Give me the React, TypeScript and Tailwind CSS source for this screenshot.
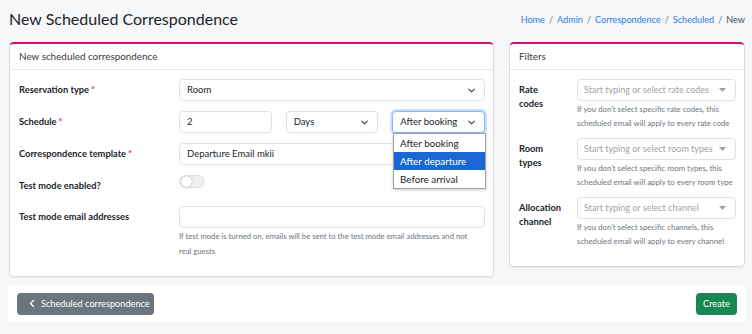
import React from "react";

const font = { fontFamily: "Lato, 'Noto Sans', sans-serif" };

function Chevron() {
  return (
    <svg width="9" height="9" viewBox="0 0 16 16" className="text-[#343a40]">
      <path d="M3 5.5l5 5 5-5" fill="none" stroke="currentColor" strokeWidth="1.8" strokeLinecap="round" strokeLinejoin="round" />
    </svg>
  );
}

function Caret() {
  return (
    <svg width="7" height="4" viewBox="0 0 7 4" className="text-[#9aa0a6]">
      <path d="M0 0h7L3.5 4z" fill="currentColor" />
    </svg>
  );
}

function Required() {
  return <span className="text-[#d6336c] ml-[2px]">*</span>;
}

function Select({ value, focused }: { value: string; focused?: boolean }) {
  return (
    <div
      className={
        "h-[22px] flex items-center justify-between pl-[7px] pr-[8px] rounded-[4px] bg-white text-[9.5px] text-[#212529] border " +
        (focused ? "border-[#86b7fe] shadow-[0_0_0_2px_rgba(13,110,253,0.22)]" : "border-[#dee2e6]")
      }
    >
      <span>{value}</span>
      <Chevron />
    </div>
  );
}

function Input({ value }: { value?: string }) {
  return (
    <div className="h-[22px] flex items-center px-[7px] rounded-[4px] bg-white border border-[#dee2e6] text-[9.5px] text-[#212529]">
      {value}
    </div>
  );
}

function FilterRow({ label, placeholder, help }: { label: string[]; placeholder: string; help: string[] }) {
  return (
    <div className="flex mb-[8px]">
      <div className="w-[58px] pt-[4px] text-[9.3px] font-bold leading-[14px] text-[#212529]">
        {label.map((l) => (
          <div key={l}>{l}</div>
        ))}
      </div>
      <div className="flex-1">
        <div className="h-[22px] flex items-center justify-between pl-[6px] pr-[9px] rounded-[4px] bg-white border border-[#dee2e6] text-[9px] text-[#a0a4a8] whitespace-nowrap">
          <span>{placeholder}</span>
          <Caret />
        </div>
        <div className="mt-[1px] text-[7.8px] leading-[14px] text-[#6c757d] whitespace-nowrap">
          {help.map((h) => (
            <div key={h}>{h}</div>
          ))}
        </div>
      </div>
    </div>
  );
}

export default function App() {
  return (
    <div className="w-[752px] h-[334px] bg-[#f6f7f9] overflow-hidden text-[#212529]" style={font}>
      <div className="flex items-center justify-between h-[37px] pl-[9px] pr-[7px] pt-[1px]">
        <h1 className="text-[16px] text-[#212529]">New Scheduled Correspondence</h1>
        <nav className="flex items-center gap-[4px] text-[9.1px] pt-[2px]">
          <span className="text-[#2d7be5]">Home</span>
          <span className="text-[#6c757d]">/</span>
          <span className="text-[#2d7be5]">Admin</span>
          <span className="text-[#6c757d]">/</span>
          <span className="text-[#2d7be5]">Correspondence</span>
          <span className="text-[#6c757d]">/</span>
          <span className="text-[#2d7be5]">Scheduled</span>
          <span className="text-[#6c757d]">/</span>
          <span className="text-[#495057]">New</span>
        </nav>
      </div>

      <div className="flex items-start gap-[15px] pl-[9px] pr-[7px] mt-[5px]">
        {/* main card */}
        <div className="w-[485px] h-[235px] bg-white rounded-[5px] border border-[#dadce0] border-t-2 border-t-[#c8136e] shadow-[0_1px_2px_rgba(0,0,0,0.06)]">
          <div className="h-[26px] flex items-center px-[9px] border-b border-[#e5e7eb] text-[9.9px] text-[#343a40]">
            New scheduled correspondence
          </div>
          <div className="pl-[9px] pr-[8px] pt-[9px] relative">
            <div className="flex items-center">
              <div className="w-[160px] text-[9.3px] font-bold">
                Reservation type<Required />
              </div>
              <div className="flex-1">
                <Select value="Room" />
              </div>
            </div>
            <div className="flex items-center mt-[10px]">
              <div className="w-[160px] text-[9.3px] font-bold">
                Schedule<Required />
              </div>
              <div className="flex-1 grid grid-cols-3 gap-[14px]">
                <Input value="2" />
                <Select value="Days" />
                <Select value="After booking" focused />
              </div>
            </div>
            <div className="flex items-center mt-[10px]">
              <div className="w-[160px] text-[9.3px] font-bold">
                Correspondence template<Required />
              </div>
              <div className="flex-1">
                <Input value="Departure Email mkii" />
              </div>
            </div>
            <div className="flex items-start mt-[10px] h-[18px]">
              <div className="w-[160px] text-[9.3px] font-bold leading-[14px] pt-[4px]">Test mode enabled?</div>
              <div className="w-[26px] h-[13px] rounded-full bg-[#eceef0] border border-[#dee2e6] flex items-center px-[1px]">
                <div className="w-[11px] h-[11px] rounded-full bg-white shadow-[0_0_1px_rgba(0,0,0,0.5)]" />
              </div>
            </div>
            <div className="flex mt-[13px]">
              <div className="w-[160px] text-[9.3px] font-bold h-[22px] flex items-center">Test mode email addresses</div>
              <div className="flex-1">
                <Input />
                <div className="mt-[1px] text-[7.7px] leading-[15px] text-[#6c757d] whitespace-nowrap">
                  If test mode is turned on, emails will be sent to the test mode email addresses and not
                  <br />
                  real guests
                </div>
              </div>
            </div>

            {/* open dropdown list */}
            <div className="absolute left-[383px] top-[63px] w-[93px] bg-white border border-[#9aa0a6] shadow-[0_1px_3px_rgba(0,0,0,0.2)] text-[9.8px]">
              <div className="h-[18px] flex items-center px-[6px] text-[#212529]">After booking</div>
              <div className="h-[18px] flex items-center px-[6px] bg-[#1967d2] text-white">After departure</div>
              <div className="h-[18px] flex items-center px-[6px] text-[#212529]">Before arrival</div>
            </div>
          </div>
        </div>

        {/* filters card */}
        <div className="w-[236px] h-[225px] bg-white rounded-[5px] border border-[#dadce0] border-t-2 border-t-[#c8136e] shadow-[0_1px_2px_rgba(0,0,0,0.06)]">
          <div className="h-[26px] flex items-center px-[9px] border-b border-[#e5e7eb] text-[9.9px] text-[#343a40]">
            Filters
          </div>
          <div className="pl-[9px] pr-[8px] pt-[9px]">
            <FilterRow
              label={["Rate", "codes"]}
              placeholder="Start typing or select rate codes"
              help={["If you don't select specific rate codes, this", "scheduled email will apply to every rate code"]}
            />
            <FilterRow
              label={["Room", "types"]}
              placeholder="Start typing or select room types"
              help={["If you don't select specific room types, this", "scheduled email will apply to every room type"]}
            />
            <FilterRow
              label={["Allocation", "channel"]}
              placeholder="Start typing or select channel"
              help={["If you don't select specific channels, this", "scheduled email will apply to every channel"]}
            />
          </div>
        </div>
      </div>

      <div className="mt-[8px] ml-[8px] w-[737px] h-[37px] bg-white flex items-center justify-between pl-[9px] pr-[8px]">
        <button className="h-[22px] w-[137px] rounded-[4px] bg-[#6c757d] text-white text-[9.2px] flex items-center pl-[11px] gap-[5px]">
          <svg width="8" height="9" viewBox="0 0 16 16">
            <path d="M11 2L5 8l6 6" fill="none" stroke="white" strokeWidth="2.8" strokeLinecap="round" strokeLinejoin="round" />
          </svg>
          Scheduled correspondence
        </button>
        <button className="h-[22px] w-[41px] rounded-[4px] bg-[#198754] text-white text-[9.3px] flex items-center justify-center">
          Create
        </button>
      </div>
    </div>
  );
}
